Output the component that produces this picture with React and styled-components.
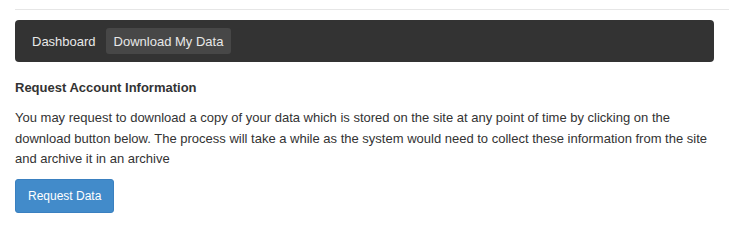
import React from "react";
import styled, { createGlobalStyle } from "styled-components";

const Global = createGlobalStyle`
  html, body { margin: 0; padding: 0; background: #fff; }
  body {
    font-family: "Liberation Sans", Helvetica, Arial, sans-serif;
    color: #333;
    -webkit-font-smoothing: antialiased;
  }
`;

const Page = styled.div`
  padding-top: 9px;
`;

const TopRule = styled.div`
  height: 1px;
  background: #e6e6e6;
  margin-left: 15px;
`;

const Content = styled.div`
  padding: 10px 15px 0;
`;

const Nav = styled.nav`
  height: 42px;
  background: #333;
  border-radius: 4px;
  display: flex;
  align-items: center;
  gap: 2px;
  padding-left: 9px;
`;

const NavItem = styled.a`
  display: flex;
  align-items: center;
  height: 26px;
  padding: 0 8px;
  font-size: 13px;
  color: #e8e8e8;
  text-decoration: none;
  border-radius: 3px;
  background: ${(p) => (p.$active ? "#474747" : "transparent")};
`;

const Heading = styled.h4`
  margin: 16px 0 0;
  font-size: 13px;
  line-height: 20px;
  font-weight: bold;
  color: #333;
`;

const Text = styled.p`
  margin: 10px 0 0;
  font-size: 13px;
  line-height: 20.6px;
  color: #333;
`;

const Button = styled.button`
  margin-top: 9px;
  height: 34px;
  padding: 0 12px;
  font-family: inherit;
  font-size: 12px;
  color: #fff;
  background: #428bca;
  border: 1px solid #3a80c0;
  border-radius: 3px;
  cursor: pointer;
`;

export default function App() {
  return (
    <Page>
      <Global />
      <TopRule />
      <Content>
        <Nav>
          <NavItem href="#">Dashboard</NavItem>
          <NavItem href="#" $active>Download My Data</NavItem>
        </Nav>
        <Heading>Request Account Information</Heading>
        <Text>
          You may request to download a copy of your data which is stored on the site at any point of time by clicking on the download button below. The process will take a while as the system would need to collect these information from the site and archive it in an archive
        </Text>
        <Button>Request Data</Button>
      </Content>
    </Page>
  );
}
